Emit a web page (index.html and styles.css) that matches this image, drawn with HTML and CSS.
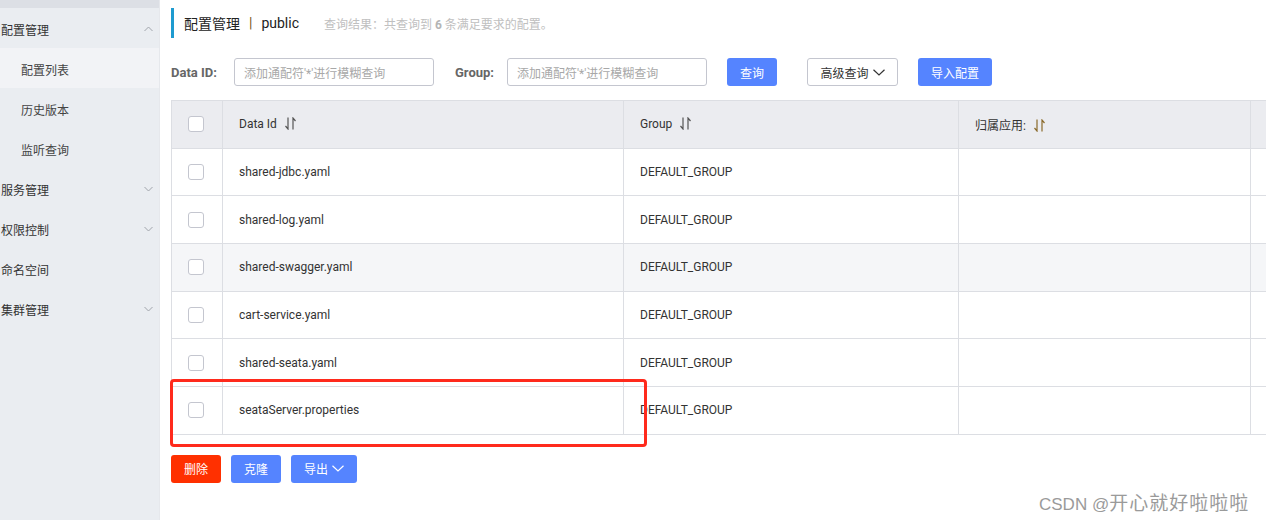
FILE: index.html
```html
<!DOCTYPE html>
<html lang="zh">
<head>
<meta charset="utf-8">
<title>配置管理</title>
<link rel="stylesheet" href="styles.css">
</head>
<body>
<div class="layout">
  <aside class="sidebar">
    <div class="side-top"></div>
    <div class="nav-item">配置管理<svg class="chev" width="9" height="6" viewBox="0 0 9 6"><path d="M0.5 5 L4.5 1 L8.5 5" fill="none" stroke="#a0a4ab" stroke-width="1"/></svg></div>
    <div class="nav-sub active">配置列表</div>
    <div class="nav-sub">历史版本</div>
    <div class="nav-sub">监听查询</div>
    <div class="nav-item">服务管理<svg class="chev" width="9" height="6" viewBox="0 0 9 6"><path d="M0.5 1 L4.5 5 L8.5 1" fill="none" stroke="#a0a4ab" stroke-width="1"/></svg></div>
    <div class="nav-item">权限控制<svg class="chev" width="9" height="6" viewBox="0 0 9 6"><path d="M0.5 1 L4.5 5 L8.5 1" fill="none" stroke="#a0a4ab" stroke-width="1"/></svg></div>
    <div class="nav-item">命名空间</div>
    <div class="nav-item">集群管理<svg class="chev" width="9" height="6" viewBox="0 0 9 6"><path d="M0.5 1 L4.5 5 L8.5 1" fill="none" stroke="#a0a4ab" stroke-width="1"/></svg></div>
  </aside>
  <main class="main">
    <div class="page-title">
      <span class="title-text">配置管理</span>
      <span class="title-sep">|</span>
      <span class="title-ns">public</span>
      <span class="title-info">查询结果：共查询到 <b>6</b> 条满足要求的配置。</span>
    </div>
    <div class="search-row">
      <label class="search-label label-id">Data ID:</label>
      <div class="input input-first">添加通配符'*'进行模糊查询</div>
      <label class="search-label label-group">Group:</label>
      <div class="input">添加通配符'*'进行模糊查询</div>
      <button class="btn btn-primary btn-query">查询</button>
      <button class="btn btn-normal btn-adv">高级查询<svg class="btn-chev" width="12" height="7" viewBox="0 0 12 7"><path d="M0.5 0.8 L6 6 L11.5 0.8" fill="none" stroke="#333" stroke-width="1.2"/></svg></button>
      <button class="btn btn-primary btn-import">导入配置</button>
    </div>
    <div class="table-wrap">
      <table class="table">
        <colgroup>
          <col class="c-check"><col class="c-id"><col class="c-group"><col class="c-app"><col class="c-op">
        </colgroup>
        <thead>
          <tr>
            <th class="cell-check"><span class="checkbox"></span></th>
            <th>Data Id<svg class="sort" width="11" height="13" viewBox="0 0 11 13"><path d="M3 0.5 V12 L0.5 9" fill="none" stroke="#555" stroke-width="1.2"/><path d="M8 12.5 V1 L10.5 4" fill="none" stroke="#555" stroke-width="1.2"/></svg></th>
            <th>Group<svg class="sort" width="11" height="13" viewBox="0 0 11 13"><path d="M3 0.5 V12 L0.5 9" fill="none" stroke="#555" stroke-width="1.2"/><path d="M8 12.5 V1 L10.5 4" fill="none" stroke="#555" stroke-width="1.2"/></svg></th>
            <th>归属应用:<svg class="sort" width="11" height="13" viewBox="0 0 11 13"><path d="M3 0.5 V12 L0.5 9" fill="none" stroke="#8a6a2a" stroke-width="1.2"/><path d="M8 12.5 V1 L10.5 4" fill="none" stroke="#8a6a2a" stroke-width="1.2"/></svg></th>
            <th></th>
          </tr>
        </thead>
        <tbody>
          <tr><td class="cell-check"><span class="checkbox"></span></td><td>shared-jdbc.yaml</td><td>DEFAULT_GROUP</td><td></td><td></td></tr>
          <tr><td class="cell-check"><span class="checkbox"></span></td><td>shared-log.yaml</td><td>DEFAULT_GROUP</td><td></td><td></td></tr>
          <tr class="hover"><td class="cell-check"><span class="checkbox"></span></td><td>shared-swagger.yaml</td><td>DEFAULT_GROUP</td><td></td><td></td></tr>
          <tr><td class="cell-check"><span class="checkbox"></span></td><td>cart-service.yaml</td><td>DEFAULT_GROUP</td><td></td><td></td></tr>
          <tr><td class="cell-check"><span class="checkbox"></span></td><td>shared-seata.yaml</td><td>DEFAULT_GROUP</td><td></td><td></td></tr>
          <tr><td class="cell-check"><span class="checkbox"></span></td><td>seataServer.properties</td><td>DEFAULT_GROUP</td><td></td><td></td></tr>
        </tbody>
      </table>
      <div class="highlight-box"></div>
    </div>
    <div class="bottom-row">
      <button class="btn btn-danger btn-del">删除</button>
      <button class="btn btn-primary btn-clone">克隆</button>
      <button class="btn btn-primary btn-export">导出<svg class="btn-chev" width="12" height="7" viewBox="0 0 12 7"><path d="M0.5 0.8 L6 6 L11.5 0.8" fill="none" stroke="#fff" stroke-width="1.2"/></svg></button>
    </div>
  </main>
</div>
<div class="watermark">CSDN @<span class="wm-cjk">开心就好啦啦啦</span></div>
</body>
</html>
```

FILE: styles.css
```css
html, body {
  margin: 0;
  padding: 0;
  background: #fff;
}
body {
  width: 1266px;
  height: 520px;
  overflow: hidden;
  font-family: Roboto, "Noto Sans CJK SC", sans-serif;
  font-size: 12px;
  color: #333;
  position: relative;
}
.layout {
  display: flex;
  height: 520px;
}
.sidebar {
  width: 160px;
  flex: none;
  background: #eaedf1;
}
.side-top {
  height: 8px;
  background: #dcdfe5;
}
.nav-item, .nav-sub {
  height: 40px;
  display: flex;
  align-items: center;
  font-size: 12px;
  color: #333;
  padding-top: 2px;
  box-sizing: border-box;
}
.nav-item {
  padding-left: 1px;
  padding-right: 7px;
  justify-content: space-between;
}
.nav-sub {
  padding-left: 21px;
  color: #444;
}
.nav-sub.active {
  background: #f2f3f6;
}
.chev {
  display: block;
}
.main {
  flex: 1;
  min-width: 0;
  overflow: hidden;
  padding-left: 11px;
  border-left: 1px solid #e6e8ec;
  margin-left: -1px;
}
.page-title {
  margin-top: 8px;
  height: 30px;
  border-left: 3px solid #1e9bd0;
  display: flex;
  align-items: center;
  padding-left: 10px;
  font-size: 14px;
  color: #222;
}
.title-sep {
  margin: 0 9px;
  color: #7a5a20;
}
.title-info {
  margin-left: 25px;
  font-size: 12px;
  color: #c0c0c0;
}
.title-info b {
  font-weight: bold;
  color: #b5b5b5;
}
.search-row {
  margin-top: 20px;
  height: 28px;
  display: flex;
  align-items: center;
}
.search-label {
  font-weight: bold;
  font-size: 13px;
  color: #666;
  margin-right: 12px;
  white-space: nowrap;
  flex: none;
}
.label-id {
  width: 51px;
}
.label-group {
  width: 40px;
}
.input {
  width: 200px;
  flex: none;
  height: 28px;
  box-sizing: border-box;
  border: 1px solid #c4c6cf;
  border-radius: 3px;
  padding-left: 9px;
  display: flex;
  align-items: center;
  color: #a8a8a8;
  font-size: 12px;
}
.input-first {
  margin-right: 21px;
}
.btn {
  height: 28px;
  box-sizing: border-box;
  border-radius: 3px;
  font-family: Roboto, "Noto Sans CJK SC", sans-serif;
  font-size: 12px;
  padding: 0;
  display: inline-flex;
  align-items: center;
  justify-content: center;
  border: 1px solid transparent;
  cursor: pointer;
  flex: none;
}
.btn-primary {
  background: #5584ff;
  color: #fff;
}
.btn-danger {
  background: #ff3000;
  color: #fff;
}
.btn-normal {
  background: #fff;
  border-color: #c4c6cf;
  color: #333;
}
.btn-query {
  width: 50px;
  margin-left: 20px;
}
.btn-adv {
  width: 91px;
  margin-left: 30px;
}
.btn-import {
  width: 74px;
  margin-left: 20px;
}
.btn-chev {
  margin-left: 4px;
  display: block;
}
.table-wrap {
  position: relative;
  margin-top: 14px;
}
.table {
  table-layout: fixed;
  border-collapse: separate;
  border-spacing: 0;
  width: 1200px;
  border-top: 1px solid #dcdee3;
  border-left: 1px solid #dcdee3;
}
.c-check { width: 51px; }
.c-id { width: 401px; }
.c-group { width: 335px; }
.c-app { width: 292px; }
.c-op { width: 121px; }
.table th, .table td {
  height: 47.7px;
  box-sizing: border-box;
  border-right: 1px solid #dcdee3;
  border-bottom: 1px solid #dcdee3;
  padding: 0 0 0 16px;
  text-align: left;
  font-weight: normal;
  font-size: 12px;
  color: #333;
  white-space: nowrap;
}
.table th {
  background: #ebecf0;
}
.table th .sort {
  vertical-align: -2px;
  margin-left: 8px;
}
.table tr.hover td {
  background: #f5f6f8;
}
.table .cell-check {
  padding: 0 0 0 16px;
}
.checkbox {
  display: block;
  width: 16px;
  height: 16px;
  box-sizing: border-box;
  border: 1px solid #c4c6cf;
  border-radius: 3px;
  background: #fff;
}
.highlight-box {
  position: absolute;
  left: -1px;
  top: 279px;
  width: 477px;
  height: 68px;
  box-sizing: border-box;
  border: 3px solid #ff2a1c;
  border-radius: 4px;
}
.bottom-row {
  margin-top: 20px;
  display: flex;
  gap: 10px;
}
.btn-del { width: 50px; }
.btn-clone { width: 50px; }
.btn-export { width: 66px; }
.watermark {
  position: absolute;
  left: 1039px;
  top: 488px;
  font-family: "Liberation Sans", "Noto Sans CJK SC", sans-serif;
  font-size: 17px;
  color: #9a9a9a;
  white-space: nowrap;
}
.wm-cjk {
  font-size: 19px;
  letter-spacing: 1px;
}
```
